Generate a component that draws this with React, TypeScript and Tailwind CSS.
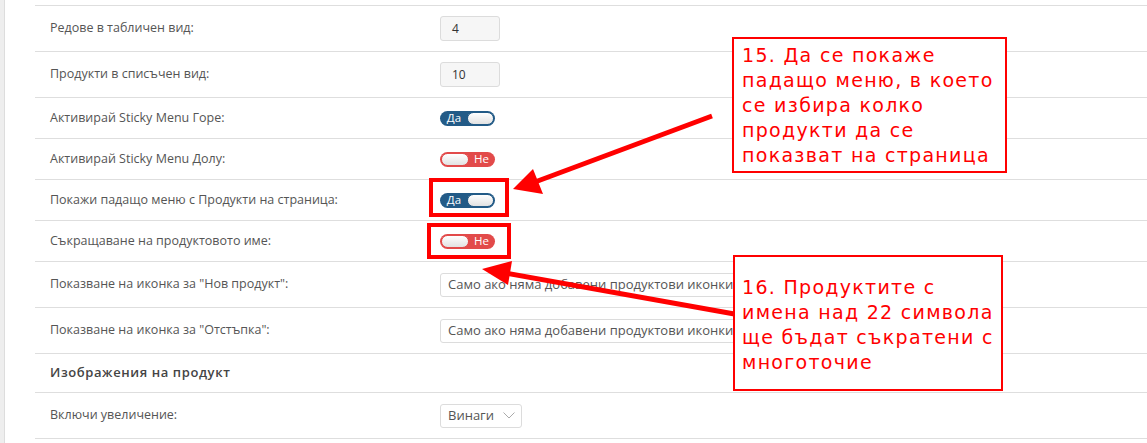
import React from "react";

const label = "text-[12.5px] text-[#555] [font-family:'Open_Sans',sans-serif]";

function NumInput({ value }: { value: string }) {
  return (
    <div className="flex h-[25px] w-[60px] items-center rounded-[3px] border border-[#dcdcdc] bg-[#f6f6f6] pl-[11px] text-[12px] text-[#333]">
      {value}
    </div>
  );
}

function Toggle({ on }: { on: boolean }) {
  if (on) {
    return (
      <div className="flex h-[15px] w-[55px] items-center rounded-full bg-[#235b87] p-[1px]">
        <span className="w-[26px] text-center text-[11.5px] leading-none text-white">Да</span>
        <span className="h-[13px] flex-1 rounded-full border border-[#235b87] bg-gradient-to-b from-white to-[#e2e2e2]" />
      </div>
    );
  }
  return (
    <div className="flex h-[15px] w-[55px] items-center rounded-full bg-[#e24a4a] p-[1px]">
      <span className="h-[13px] w-[28px] rounded-full border border-[#e24a4a] bg-gradient-to-b from-white to-[#e2e2e2]" />
      <span className="flex-1 text-center text-[11.5px] leading-none text-white">Не</span>
    </div>
  );
}

function Select({ text, w }: { text: string; w: string }) {
  return (
    <div className={`flex h-[24px] items-center justify-between rounded-[3px] border border-[#dcdcdc] bg-white pl-[7px] pr-[6px] text-[13px] text-[#555] ${w}`}>
      <span className="whitespace-nowrap">{text}</span>
      <svg width="12" height="7" viewBox="0 0 12 7" className="ml-2 shrink-0">
        <path d="M0.5 0.5 L6 6 L11.5 0.5" fill="none" stroke="#aaa" strokeWidth="1" />
      </svg>
    </div>
  );
}

function Row({ h, title, bold, children }: { h: string; title: string; bold?: boolean; children?: React.ReactNode }) {
  return (
    <div className={`flex items-center border-b border-[#dedede] pl-[15px] ${h}`}>
      <div className={bold ? "w-[390px] text-[13px] font-semibold tracking-[0.6px] text-[#444]" : `w-[390px] ${label}`}>{title}</div>
      <div className="flex items-center">{children}</div>
    </div>
  );
}

export default function App() {
  return (
    <div className="relative flex h-[443px] w-[1147px] overflow-hidden bg-white [font-family:'Open_Sans',sans-serif]">
      <div className="w-[5px] shrink-0 border-r border-[#dddddd] bg-[#eeeeee]" />
      <div className="ml-[30px] flex-1">
        <div className="h-[6px] border-b border-[#dedede]" />
        <Row h="h-[46px]" title="Редове в табличен вид:"><NumInput value="4" /></Row>
        <Row h="h-[46px]" title="Продукти в списъчен вид:"><NumInput value="10" /></Row>
        <Row h="h-[41px]" title="Активирай Sticky Menu Горе:"><Toggle on /></Row>
        <Row h="h-[41px]" title="Активирай Sticky Menu Долу:"><Toggle on={false} /></Row>
        <Row h="h-[41px]" title="Покажи падащо меню с Продукти на страница:"><Toggle on /></Row>
        <Row h="h-[41px]" title="Съкращаване на продуктовото име:"><Toggle on={false} /></Row>
        <Row h="h-[46px]" title={'Показване на иконка за "Нов продукт":'}>
          <Select text="Само ако няма добавени продуктови иконки" w="w-[340px]" />
        </Row>
        <Row h="h-[46px]" title={'Показване на иконка за "Отстъпка":'}>
          <Select text="Само ако няма добавени продуктови иконки" w="w-[340px]" />
        </Row>
        <Row h="h-[39px]" title="Изображения на продукт" bold />
        <Row h="h-[46px]" title="Включи увеличение:">
          <Select text="Винаги" w="w-[82px]" />
        </Row>
      </div>

      {/* annotation overlays */}
      <div className="absolute left-[429px] top-[178px] h-[39px] w-[80px] border-4 border-[#ff0000]" />
      <div className="absolute left-[427px] top-[223px] h-[36px] w-[84px] border-4 border-[#ff0000]" />

      <svg className="pointer-events-none absolute left-0 top-0" width="1147" height="443">
        <line x1="712" y1="116" x2="535" y2="182" stroke="#ff0000" strokeWidth="5" />
        <polygon points="513,189 533,169 543,194" fill="#ff0000" />
        <line x1="740" y1="315" x2="505" y2="273" stroke="#ff0000" strokeWidth="5" />
        <polygon points="482,269 512,261 508,285" fill="#ff0000" />
      </svg>

      <div className="absolute left-[732px] top-[37px] h-[136px] w-[275px] border-2 border-[#ff0000] bg-white pl-[8px] pt-[4px] text-[19px] leading-[25px] tracking-[1.3px] text-[#ff0000] [font-family:'DejaVu_Sans',sans-serif]">
        15. Да се покаже
        <br />
        падащо меню, в което
        <br />
        се избира колко
        <br />
        продукти да се
        <br />
        показват на страница
      </div>
      <div className="absolute left-[733px] top-[255px] h-[136px] w-[270px] border-2 border-[#ff0000] bg-white pl-[7px] pt-[18px] text-[19px] leading-[25px] tracking-[1.3px] text-[#ff0000] [font-family:'DejaVu_Sans',sans-serif]">
        16. Продуктите с
        <br />
        имена над 22 символа
        <br />
        ще бъдат съкратени с
        <br />
        многоточие
      </div>
    </div>
  );
}
